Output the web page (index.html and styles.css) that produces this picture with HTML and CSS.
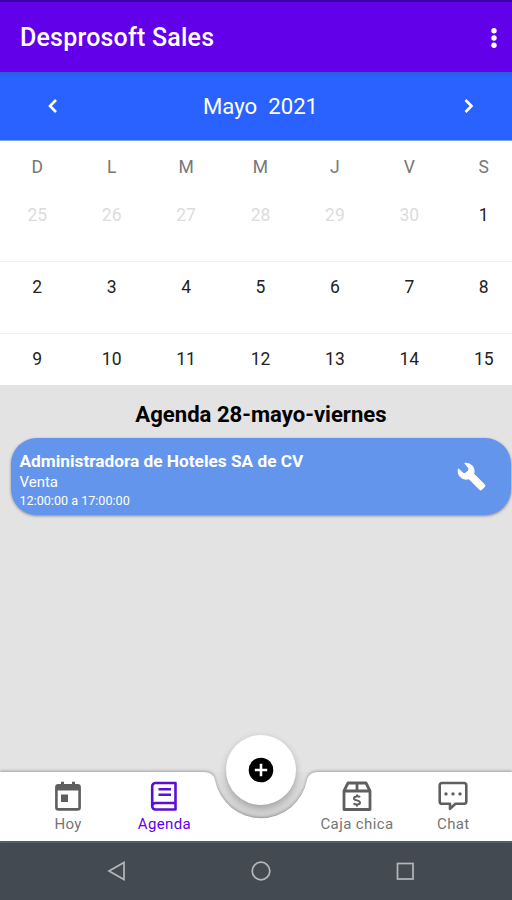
FILE: index.html
```html
<!DOCTYPE html>
<html lang="es">
<head>
    <meta charset="UTF-8" />
    <meta name="viewport" content="width=device-width, initial-scale=1" />
    <title>Desprosoft Sales</title>
    <link rel="stylesheet" href="styles.css">
</head>
<body>
<div class="app">
    <header class="app-bar">
        <h1 class="app-title">Desprosoft Sales</h1>
        <button class="icon-btn" type="button" aria-label="Menú">
            <svg width="8" height="24" viewBox="0 0 8 24" fill="#fff">
                <circle cx="4" cy="4.7" r="2.7" />
                <circle cx="4" cy="12" r="2.7" />
                <circle cx="4" cy="19.3" r="2.7" />
            </svg>
        </button>
    </header>

    <div class="month-bar">
        <button class="icon-btn" type="button" aria-label="Mes anterior">
            <svg width="12" height="16" viewBox="0 0 12 16" fill="none" stroke="#fff" stroke-width="2.6"><path d="M10 2L4 8l6 6" /></svg>
        </button>
        <span class="month">Mayo&nbsp; 2021</span>
        <button class="icon-btn" type="button" aria-label="Mes siguiente">
            <svg width="12" height="16" viewBox="0 0 12 16" fill="none" stroke="#fff" stroke-width="2.6"><path d="M2.5 2l6 6-6 6" /></svg>
        </button>
    </div>

    <section class="calendar">
        <div class="week weekdays">
            <span>D</span><span>L</span><span>M</span><span>M</span><span>J</span><span>V</span><span>S</span>
        </div>
        <div class="week">
            <span class="other">25</span><span class="other">26</span><span class="other">27</span><span class="other">28</span><span class="other">29</span><span class="other">30</span><span>1</span>
        </div>
        <div class="week">
            <span>2</span><span>3</span><span>4</span><span>5</span><span>6</span><span>7</span><span>8</span>
        </div>
        <div class="week">
            <span>9</span><span>10</span><span>11</span><span>12</span><span>13</span><span>14</span><span>15</span>
        </div>
    </section>

    <main class="agenda">
        <h2 class="agenda-title">Agenda 28-mayo-viernes</h2>
        <article class="event">
            <div class="event-info">
                <div class="event-name">Administradora de Hoteles SA de CV</div>
                <div class="event-type">Venta</div>
                <div class="event-time">12:00:00 a 17:00:00</div>
            </div>
            <svg class="event-icon" width="29" height="29" viewBox="0 0 24 24" fill="#fff" stroke="#fff" stroke-width="1" stroke-linejoin="round">
                <path d="M22.7 19l-9.1-9.1c.9-2.3.4-5-1.5-6.9-1.500-1.500-3.600-2.100-5.500-1.900L10 5 9.500 7.500 7 9.500 5 9.500 1.200 6C.9 8.200 1.400 10.600 2.900 12.100c1.900 1.900 4.600 2.400 6.900 1.500l9.100 9.100c.4.4 1 .4 1.4 0l2.300-2.300c.5-.4.5-1.100.1-1.400z" />
            </svg>
        </article>
    </main>

    <nav class="tabs">
        <!-- Bar background with the notch for the floating button -->
        <svg class="tabs-bg" width="512" height="70" viewBox="0 0 512 70">
            <defs>
                <linearGradient id="notchShade" x1="0" y1="0" x2="0" y2="1">
                    <stop offset="0" stop-color="#e0e0e0" />
                    <stop offset="1" stop-color="#cfcfcf" />
                </linearGradient>
            </defs>
            <path fill="url(#notchShade)" d="M204 1Q213 1 215 9A46.800 46.800 0 0 0 307 9Q309 1 318 1Z" />
            <path class="bar" d="M0 1H204Q213 1 215 9A46.800 46.800 0 0 0 307 9Q309 1 318 1H512V70H0Z" />
        </svg>
        <a class="tab" href="#">
            <svg width="28" height="30" viewBox="0 0 28 30" fill="none" stroke="#5f5f5f" stroke-width="2.6">
                <rect x="2.4" y="4.4" width="23.2" height="24" rx="2" />
                <path d="M2 7h24" stroke-width="5" />
                <path d="M8.5 .8v5M19.5 .8v5" stroke-width="3" />
                <path fill="#5f5f5f" stroke="none" d="M7 13.500h7v7.500H7z" />
            </svg>
            <span>Hoy</span>
        </a>
        <a class="tab active" href="#">
            <svg width="28" height="30" viewBox="0 0 28 30" fill="none" stroke="#5b0fd6" stroke-width="2.600">
                <path d="M25.500 22V2H5.500A3.300 3.300 0 0 0 2.200 5.300V25.200A3.300 3.300 0 0 0 5.500 28.500H25.500V22H5.500A3.300 3.300 0 0 0 2.200 25.200" stroke-linejoin="round" />
                <path d="M8.500 8.300h12.500M8.500 13.700h12.500" />
            </svg>
            <span>Agenda</span>
        </a>
        <a class="tab caja" href="#">
            <svg width="30" height="30" viewBox="0 0 30 30" fill="none" stroke="#5f5f5f" stroke-width="2.800">
                <path d="M2 10L6 2H24L28 10V28.500H2ZM2 10H28M15 2V10" stroke-linejoin="round" />
                <path d="M18 16.300C17.200 15.100 12 14.700 12 17.400C12 20 18 18.800 18 21.600C18 24.300 12.500 24 11.700 22.300M15 13.400V15.300M15 23.600V25.400" stroke-width="2" />
            </svg>
            <span>Caja chica</span>
        </a>
        <a class="tab" href="#">
            <svg width="30" height="30" viewBox="0 0 30 30" fill="none" stroke="#5f5f5f" stroke-width="2.600">
                <path d="M4 2H26Q28.300 2 28.300 4.300V20.500Q28.300 22.800 26 22.800H17.500L12 27.800V22.800H4Q1.700 22.800 1.700 20.500V4.300Q1.700 2 4 2Z" stroke-linejoin="round" />
                <g fill="#5f5f5f" stroke="none">
                    <circle cx="8" cy="12.900" r="1.700" />
                    <circle cx="15" cy="12.900" r="1.700" />
                    <circle cx="22" cy="12.900" r="1.700" />
                </g>
            </svg>
            <span>Chat</span>
        </a>
        <button class="fab" type="button" aria-label="Agregar">
            <svg width="26" height="26" viewBox="0 0 26 26">
                <circle cx="13" cy="13" r="12.300" />
                <path d="M13 6.800v12.400M6.800 13h12.400" stroke="#fff" stroke-width="2.600" />
            </svg>
        </button>
    </nav>

    <footer class="system-bar">
        <svg width="20" height="22" viewBox="0 0 20 22"><path d="M17 2.500V19.500L2 11Z" /></svg>
        <svg width="20" height="22" viewBox="0 0 20 22"><circle cx="10" cy="11" r="8.800" /></svg>
        <svg width="20" height="22" viewBox="0 0 20 22"><rect x="2.500" y="3.500" width="15.500" height="15.500" /></svg>
    </footer>
</div>
</body>
</html>
```
FILE: styles.css
```css
* {
    box-sizing: border-box;
}

body {
    margin: 0;
    font-family: Roboto, 'Liberation Sans', sans-serif;
    background: #e3e3e3;
}

button {
    border: none;
    background: none;
    padding: 0;
}

svg {
    display: block;
}

.app {
    width: 512px;
    height: 900px;
    display: flex;
    flex-direction: column;
    overflow: hidden;
}

/* Header */
.app-bar {
    height: 72px;
    display: flex;
    align-items: center;
    justify-content: space-between;
    padding: 1px 14px 0 20px;
    background: #6200ea;
    border-top: 2px solid #3d00a8;
}

.app-title {
    margin: 0;
    font-size: 25px;
    font-weight: 500;
    letter-spacing: 0.2px;
    color: #fff;
}

.month-bar {
    height: 69px;
    display: flex;
    align-items: center;
    justify-content: space-between;
    padding: 0 37px 0 46px;
    background: linear-gradient(#2a5ddc, #2962ff 6px);
    border-bottom: 1px solid #7f9fee;
    color: #fff;
}

.month {
    font-size: 22.2px;
}

/* Calendar */
.calendar {
    height: 244px;
    background: #fff;
    overflow: hidden;
}

.week {
    width: 521px;
    height: 72px;
    display: grid;
    grid-template-columns: repeat(7, 1fr);
    padding-top: 14px;
    border-bottom: 1px solid #f0f0f0;
    font-size: 17.5px;
    line-height: 22px;
    text-align: center;
    color: #222;
}

.weekdays {
    height: 49px;
    padding-top: 15px;
    border-bottom: none;
    color: #777;
}

.other {
    color: #dcdcdc;
}

/* Agenda */
.agenda {
    flex: 1;
    padding: 15px 1px 0 11px;
    background: #e3e3e3;
}

.agenda-title {
    margin: 0 0 10px;
    font-size: 22.1px;
    font-weight: 700;
    line-height: 28px;
    text-align: center;
    color: #000;
}

.event {
    height: 77px;
    display: flex;
    justify-content: space-between;
    padding: 11px 25px 0 8.5px;
    border-radius: 26px;
    background: #6495ed;
    box-shadow: 0 1px 3px rgba(0, 0, 0, 0.4);
    color: #fff;
}

.event-name {
    font-size: 17.25px;
    font-weight: 700;
    line-height: 24px;
}

.event-type {
    font-size: 15px;
    line-height: 19px;
}

.event-time {
    font-size: 12.6px;
    line-height: 18px;
}

.event-icon {
    margin-top: 13px;
}

/* Bottom tabs */
.tabs {
    position: relative;
    height: 70px;
    display: grid;
    grid-template-columns: repeat(5, 96.3px);
    justify-content: start;
    padding: 10px 0 0 20px;
}

.tabs-bg {
    position: absolute;
    left: 0;
    top: 0;
    overflow: visible;
}

.tabs-bg .bar {
    fill: #fff;
    filter: drop-shadow(0 -1px 1.5px rgba(0, 0, 0, 0.3));
}

.tab {
    position: relative;
    display: flex;
    flex-direction: column;
    align-items: center;
    font-size: 15px;
    line-height: 20px;
    letter-spacing: 0.4px;
    gap: 3px;
    color: #757575;
    text-decoration: none;
    white-space: nowrap;
}

/* The third column stays free under the floating button */
.caja {
    grid-column: 4;
}

.tab.active {
    color: #6200ee;
}

.fab {
    position: absolute;
    left: 226px;
    top: -36px;
    width: 70px;
    height: 70px;
    display: flex;
    align-items: center;
    justify-content: center;
    border-radius: 50%;
    background: #fff;
    box-shadow: 0 3px 7px rgba(0, 0, 0, 0.25);
}

/* Android navigation */
.system-bar {
    height: 59px;
    display: flex;
    justify-content: space-between;
    align-items: center;
    padding: 0 97px 2px 107px;
    background: #434a51;
    border-top: 2px solid #596066;
    fill: none;
    stroke: #b4b8bb;
    stroke-width: 1.7;
}
```
